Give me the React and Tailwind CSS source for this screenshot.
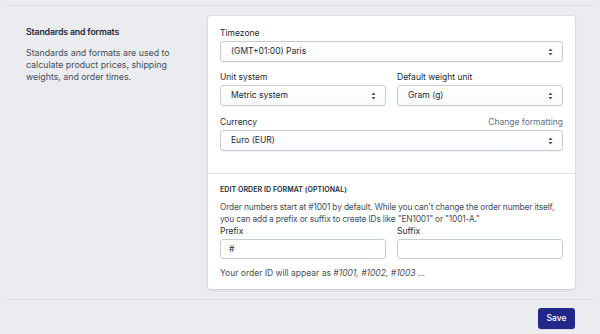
import React from 'react';

const Arrows = () => (
  <svg width="5" height="8" viewBox="0 0 5 8" className="flex-shrink-0">
    <path d="M2.5 0.6 L4.5 3.1 H0.5 Z" fill="#4a4f5c" />
    <path d="M2.5 7.4 L4.5 4.9 H0.5 Z" fill="#4a4f5c" />
  </svg>
);

const Select = ({ value }) => (
  <div className="h-[21px] flex items-center justify-between pl-[10px] pr-[9px] rounded-[3px] border border-[#c4cdd5] bg-gradient-to-b from-white to-[#f9fafb] shadow-[0_1px_0_rgba(22,29,37,0.05)] text-[8.5px] text-[#212b36]">
    <span>{value}</span>
    <Arrows />
  </div>
);

const Label = ({ children, right }) => (
  <div className="flex items-center justify-between h-[12px] mb-[2px] text-[8.5px] text-[#212b36]">
    <span>{children}</span>
    {right && <span className="text-[#637381]">{right}</span>}
  </div>
);

const Input = ({ value }) => (
  <div className="h-[20px] flex items-center pl-[8px] rounded-[3px] border border-[#c4cdd5] bg-white text-[8.5px] text-[#212b36]">
    {value}
  </div>
);

export default function App() {
  return (
    <div className="w-full h-[334px] bg-[#ebecf0] font-['Inter','Liberation_Sans',sans-serif] overflow-hidden">
      <div className="h-[5px]" />
      <div className="mx-[6px] border-t border-[#d7d9df]">
        <div className="flex pt-[10px]">
          {/* left description */}
          <div className="w-[202px] pl-[20px] pr-[22px] pt-[10px]">
            <h2 className="text-[8.8px] font-semibold tracking-[-0.02em] text-[#212b36] leading-[12px]">Standards and formats</h2>
            <p className="mt-[9px] text-[8.8px] leading-[11.8px] text-[#454f5b]">
              Standards and formats are used to calculate product prices, shipping weights, and order times.
            </p>
          </div>

          {/* card */}
          <div className="w-[367px] bg-white rounded-[3px] shadow-[0_0_0_1px_rgba(63,63,68,0.05),0_1px_3px_rgba(63,63,68,0.15)]">
            <div className="px-[12px] pt-[11px] pb-[22px]">
              <Label>Timezone</Label>
              <Select value="(GMT+01:00) Paris" />

              <div className="mt-[9px] grid grid-cols-2 gap-[11px]">
                <div>
                  <Label>Unit system</Label>
                  <Select value="Metric system" />
                </div>
                <div>
                  <Label>Default weight unit</Label>
                  <Select value="Gram (g)" />
                </div>
              </div>

              <div className="mt-[10px]">
                <Label right="Change formatting">Currency</Label>
                <Select value="Euro (EUR)" />
              </div>
            </div>

            <div className="border-t border-[#dfe3e8] px-[12px] pt-[11px] pb-[10px]">
              <div className="text-[7px] font-semibold tracking-[0.01em] text-[#212b36] leading-[9px]">EDIT ORDER ID FORMAT (OPTIONAL)</div>
              <p className="mt-[8px] text-[8.4px] leading-[11.5px] tracking-[-0.02em] text-[#454f5b]">
                Order numbers start at #1001 by default. While you can't change the order number itself, you can add a prefix or suffix to create IDs like "EN1001" or "1001-A."
              </p>
              <div className="grid grid-cols-2 gap-[11px]">
                <div>
                  <Label>Prefix</Label>
                  <Input value="#" />
                </div>
                <div>
                  <Label>Suffix</Label>
                  <Input value="" />
                </div>
              </div>
              <p className="mt-[8px] text-[8.5px] leading-[12px] text-[#454f5b]">
                Your order ID will appear as <em>#1001, #1002, #1003 ...</em>
              </p>
            </div>
          </div>
        </div>

        <div className="mt-[10px] border-t border-[#d7d9df]" />
        <div className="flex justify-end pr-[19px] pt-[8px]">
          <button className="h-[21px] w-[37px] rounded-[3px] bg-[#22278a] text-white text-[8.5px] font-medium shadow-[0_1px_0_rgba(22,29,37,0.1)]">
            Save
          </button>
        </div>
      </div>
    </div>
  );
}
